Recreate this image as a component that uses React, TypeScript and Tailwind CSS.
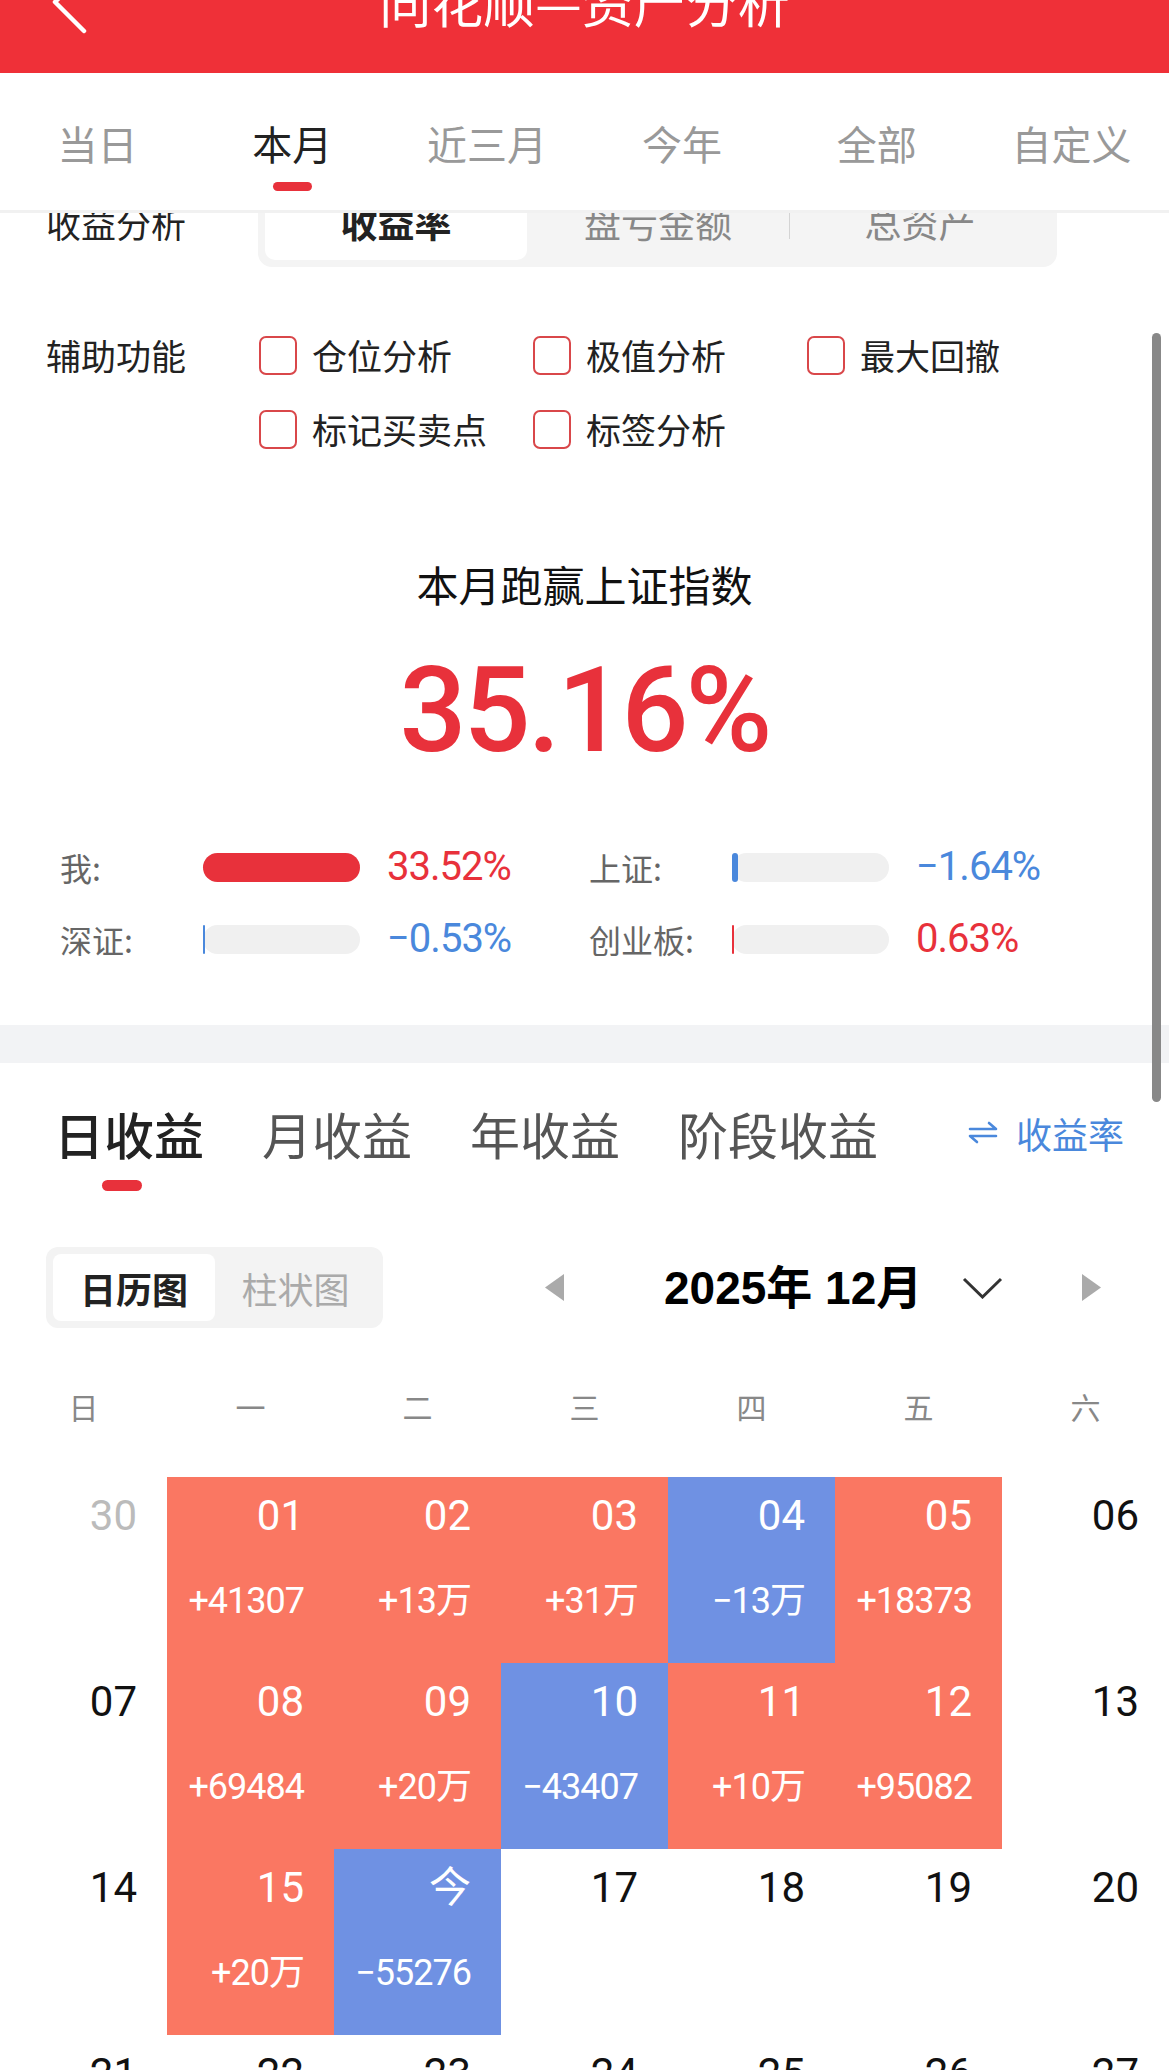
import React from 'react';

const RED = '#e8313b';
const BLUE = '#4a88dc';

const periodTabs = ['当日', '本月', '近三月', '今年', '全部', '自定义'];
const helpers = ['仓位分析', '极值分析', '最大回撤', '标记买卖点', '标签分析'];
const weekdays = ['日', '一', '二', '三', '四', '五', '六'];

type Cell = { d: string; v?: string; c?: 'r' | 'b'; muted?: boolean };

const weeks: Cell[][] = [
  [
    { d: '30', muted: true },
    { d: '01', v: '+41307', c: 'r' },
    { d: '02', v: '+13万', c: 'r' },
    { d: '03', v: '+31万', c: 'r' },
    { d: '04', v: '−13万', c: 'b' },
    { d: '05', v: '+18373', c: 'r' },
    { d: '06' },
  ],
  [
    { d: '07' },
    { d: '08', v: '+69484', c: 'r' },
    { d: '09', v: '+20万', c: 'r' },
    { d: '10', v: '−43407', c: 'b' },
    { d: '11', v: '+10万', c: 'r' },
    { d: '12', v: '+95082', c: 'r' },
    { d: '13' },
  ],
  [
    { d: '14' },
    { d: '15', v: '+20万', c: 'r' },
    { d: '今', v: '−55276', c: 'b' },
    { d: '17' },
    { d: '18' },
    { d: '19' },
    { d: '20' },
  ],
  [{ d: '21' }, { d: '22' }, { d: '23' }, { d: '24' }, { d: '25' }, { d: '26' }, { d: '27' }],
];

function CompareItem({ label, value, color, fill }: { label: string; value: string; color: string; fill: number }) {
  return (
    <div className="flex items-center h-[40px]">
      <span className="w-[143px] text-[32px] leading-[40px] text-[#666]">{label}</span>
      <div className="relative w-[157px] h-[29px] rounded-full bg-[#f0f0f0]">
        <div className="absolute left-0 top-0 h-full rounded-full" style={{ width: fill, backgroundColor: color }} />
      </div>
      <span
        className="ml-[27px] text-[40px] leading-[40px] tracking-[-1px] font-['Roboto',sans-serif]"
        style={{ color }}
      >
        {value}
      </span>
    </div>
  );
}

export default function App() {
  return (
    <div className="relative w-[1169px] h-[2070px] overflow-hidden bg-white font-['Noto_Sans_CJK_SC',sans-serif] text-[#222]">
      {/* 顶部标题栏 */}
      <header className="relative h-[73px] bg-[#ef3038] overflow-hidden flex justify-center">
        <svg className="absolute left-0 top-0" width="100" height="40" viewBox="0 0 100 40">
          <polyline points="84,-27 55,2 84,31" fill="none" stroke="white" strokeWidth="4.5" strokeLinecap="round" strokeLinejoin="round" />
        </svg>
        <h1 className="-mt-[25px] text-[52px] leading-[52px] text-white font-normal">同花顺—资产分析</h1>
      </header>

      {/* 时间范围 */}
      <nav className="h-[140px] border-b-[3px] border-[#f1f1f1] flex">
        {periodTabs.map((t, i) => (
          <div key={t} className="flex-1 flex flex-col items-center pt-[50px]">
            <span className={`text-[40px] leading-[40px] ${i === 1 ? 'text-[#222]' : 'text-[#999]'}`}>{t}</span>
            {i === 1 && <span className="mt-[19px] w-[39px] h-[9px] rounded-full bg-[#e8313b]" />}
          </div>
        ))}
      </nav>

      {/* 收益分析 (被遮挡) */}
      <div className="h-[54px] overflow-hidden">
        <div className="-mt-[34px] h-[88px] flex items-center pl-[46px]">
          <span className="w-[212px] text-[35px] leading-[40px]">收益分析</span>
          <div className="w-[799px] h-[88px] rounded-[14px] bg-[#f4f4f4] p-[7px] flex items-center">
            <div className="w-[262px] h-full rounded-[10px] bg-white flex items-center justify-center text-[37px] font-bold">收益率</div>
            <div className="w-[262px] h-full flex items-center justify-center text-[37px] text-[#888]">盘亏金额</div>
            <div className="w-[1px] h-[31px] bg-[#d4d4d4]" />
            <div className="flex-1 h-full flex items-center justify-center text-[37px] text-[#888]">总资产</div>
          </div>
        </div>
      </div>

      {/* 辅助功能 */}
      <section className="pt-[61px] pl-[46px] flex">
        <span className="w-[213px] text-[35px] leading-[54px]">辅助功能</span>
        <div className="grid grid-cols-[274px_274px_274px] gap-y-[20px]">
          {helpers.map((h) => (
            <label key={h} className="flex items-center h-[54px]">
              <span className="w-[38px] h-[39px] rounded-[7px] border-2 border-[#d9474a]" />
              <span className="ml-[15px] text-[35px] leading-[54px]">{h}</span>
            </label>
          ))}
        </div>
      </section>

      {/* 跑赢指数 */}
      <section className="flex flex-col items-center">
        <p className="mt-[107px] text-[42px] leading-[42px] text-[#111]">本月跑赢上证指数</p>
        <p className="mt-[47px] text-[118px] leading-none tracking-[-3px] font-medium font-['Roboto',sans-serif] text-[#e8313b]">
          35.16%
        </p>
      </section>

      <section className="mt-[77px] pl-[60px] grid grid-cols-[529px_529px] gap-y-[32px]">
        <CompareItem label="我:" value="33.52%" color={RED} fill={157} />
        <CompareItem label="上证:" value="−1.64%" color={BLUE} fill={6} />
        <CompareItem label="深证:" value="−0.53%" color={BLUE} fill={2} />
        <CompareItem label="创业板:" value="0.63%" color={RED} fill={2} />
      </section>

      <div className="mt-[66px] h-[38px] bg-[#f2f3f5]" />

      {/* 收益类型 */}
      <div className="mt-[45px] flex items-center h-[50px] pl-[54px]">
        <div className="flex gap-[58px] text-[50px] leading-[50px]">
          <span className="font-medium text-[#222]">日收益</span>
          <span className="text-[#555]">月收益</span>
          <span className="text-[#555]">年收益</span>
          <span className="text-[#555]">阶段收益</span>
        </div>
        <div className="ml-auto mr-[45px] flex items-center text-[#4a88dc]">
          <svg width="30" height="24" viewBox="0 0 30 24" fill="none" stroke="#4a88dc" strokeWidth="2.6" strokeLinecap="round" strokeLinejoin="round">
            <path d="M2 8 H28 L21 2" />
            <path d="M28 15 H2 L9 21" />
          </svg>
          <span className="ml-[18px] text-[36px] leading-[40px]">收益率</span>
        </div>
      </div>
      <div className="mt-[22px] ml-[102px] w-[40px] h-[11px] rounded-full bg-[#e8313b]" />

      {/* 日历图 / 月份 */}
      <div className="mt-[56px] pl-[46px] flex items-center h-[81px]">
        <div className="w-[337px] h-[81px] rounded-[12px] bg-[#f3f3f3] p-[7px] flex items-center">
          <div className="w-[162px] h-full rounded-[8px] bg-white flex items-center justify-center text-[36px] font-bold text-[#222]">日历图</div>
          <div className="flex-1 flex items-center justify-center text-[36px] text-[#aaa]">柱状图</div>
        </div>
        <svg className="ml-[161px]" width="21" height="27" viewBox="0 0 21 27">
          <polygon points="20,0 20,27 1,13.5" fill="#aaa" />
        </svg>
        <span className="ml-[99px] w-[261px] whitespace-nowrap text-[46px] leading-[50px] font-bold text-black font-['Liberation_Sans','Noto_Sans_CJK_SC',sans-serif]">
          2025年 12月
        </span>
        <svg className="ml-[37px]" width="41" height="22" viewBox="0 0 41 22">
          <polyline points="2,2 20.5,20 39,2" fill="none" stroke="#333" strokeWidth="3" />
        </svg>
        <svg className="ml-[78px]" width="21" height="27" viewBox="0 0 21 27">
          <polygon points="1,0 1,27 20,13.5" fill="#aaa" />
        </svg>
      </div>

      {/* 星期 */}
      <div className="mt-[63px] grid grid-cols-7">
        {weekdays.map((w) => (
          <span key={w} className="text-center text-[30px] leading-[30px] text-[#888]">{w}</span>
        ))}
      </div>

      {/* 日历 */}
      <div className="mt-[56px]">
        {weeks.map((week, wi) => (
          <div key={wi} className="grid grid-cols-7">
            {week.map((c, ci) => {
              const bg = c.c === 'r' ? 'bg-[#fa7762]' : c.c === 'b' ? 'bg-[#6f91e3]' : 'bg-white';
              const fg = c.c ? 'text-white' : c.muted ? 'text-[#bbb]' : 'text-[#111]';
              return (
                <div key={ci} className={`h-[186px] flex flex-col items-end pr-[30px] pt-[18px] ${bg} ${fg} font-['Roboto','Noto_Sans_CJK_SC',sans-serif]`}>
                  <span className="text-[42px] leading-[42px]">{c.d}</span>
                  {c.v && <span className="mt-[46px] text-[36px] leading-[36px] tracking-[-1px]">{c.v}</span>}
                </div>
              );
            })}
          </div>
        ))}
      </div>

      {/* 滚动条 */}
      <div className="absolute left-[1152px] top-[333px] w-[9px] h-[769px] rounded-full bg-[#888]" />
    </div>
  );
}
